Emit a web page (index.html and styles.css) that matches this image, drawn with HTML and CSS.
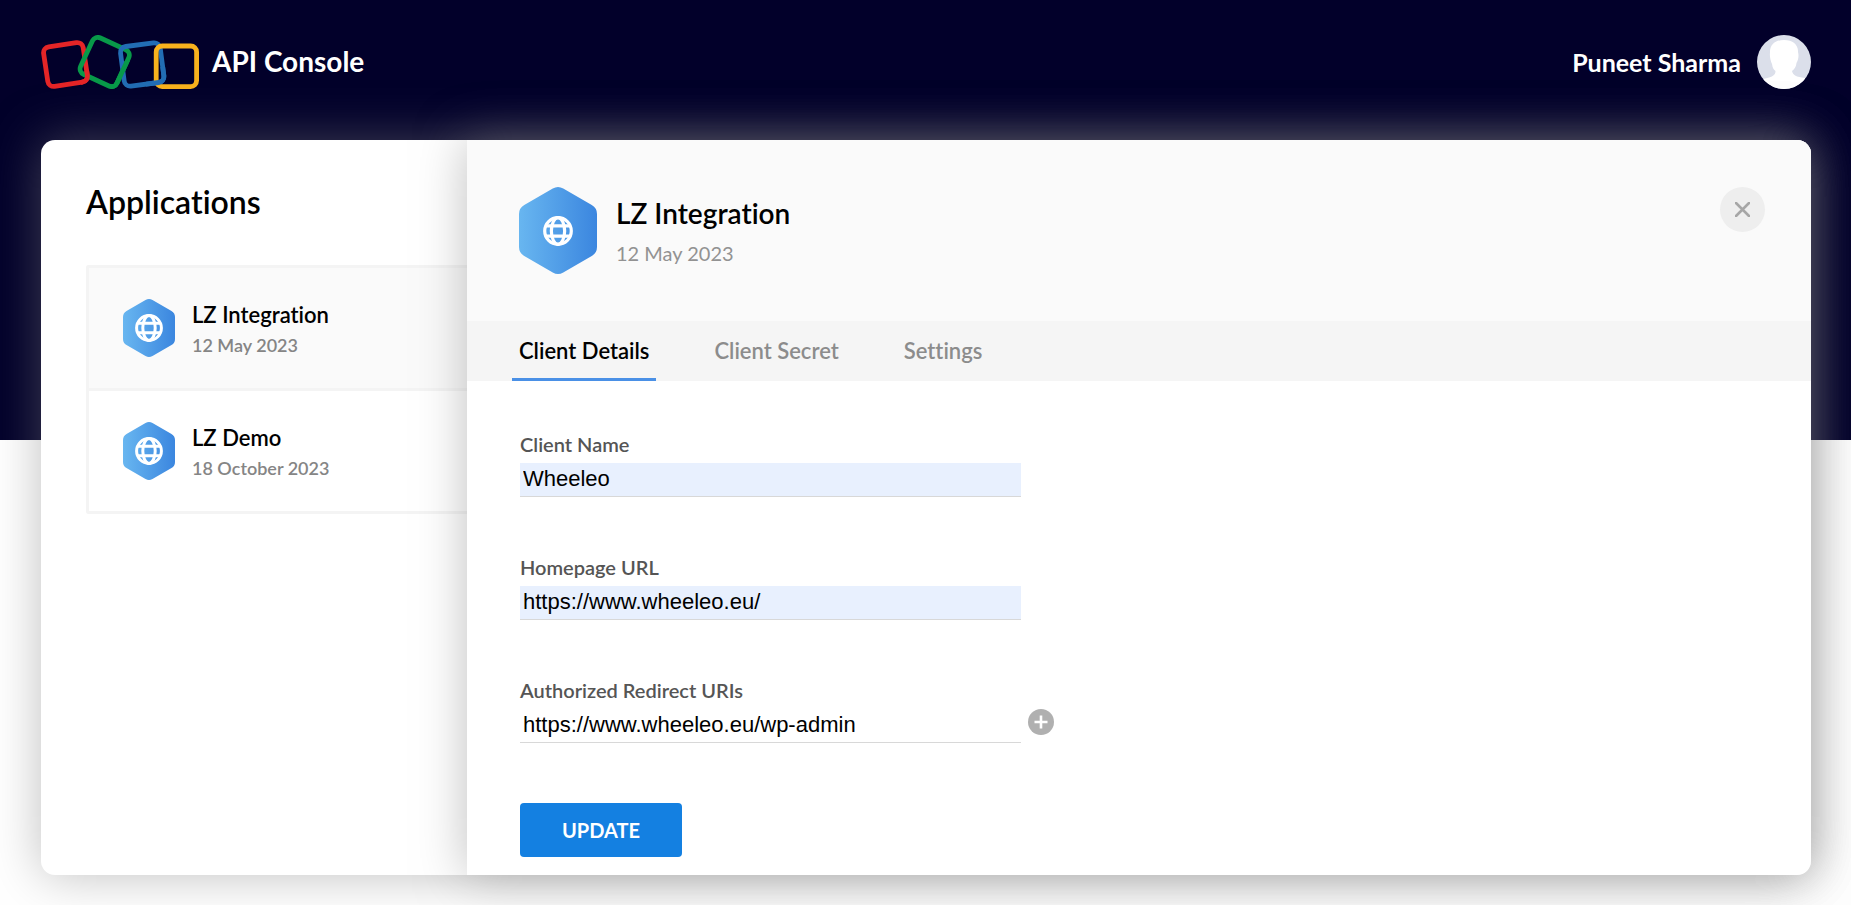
FILE: index.html
```html
<!DOCTYPE html>
<html lang="en">
<head>
<meta charset="utf-8">
<meta name="viewport" content="width=device-width, initial-scale=1">
<title>API Console</title>
<link rel="stylesheet" href="styles.css">
</head>
<body>
<svg class="defs" width="0" height="0" aria-hidden="true">
  <defs>
    <linearGradient id="hex-fill" x1="0" y1="0" x2="1" y2="0">
      <stop offset="0" stop-color="#68b6f0"/>
      <stop offset="1" stop-color="#3b86df"/>
    </linearGradient>
    <symbol id="hexagon" viewBox="0 0 52 58">
      <path fill="url(#hex-fill)" d="M22.5 1Q26-1 29.5 1L48.5 12Q52 14 52 18V40Q52 44 48.5 46L29.5 57Q26 59 22.500 57L3.500 46Q0 44 0 40V18Q0 14 3.500 12Z"/>
    </symbol>
    <symbol id="globe" viewBox="0 0 28 28">
      <g fill="none" stroke="#fff" stroke-width="3">
        <circle cx="14" cy="14" r="12.400"/>
        <ellipse cx="14" cy="14" rx="6.200" ry="12.400"/>
        <path d="M3 9.300H25M3 18.700H25"/>
      </g>
    </symbol>
  </defs>
</svg>

<header class="topbar">
  <a class="brand" href="#">
    <svg class="brand-logo" viewBox="0 0 158 54" aria-hidden="true">
      <defs>
        <rect id="ring-red" x="-20" y="-20" width="40" height="40" rx="6" stroke="#e42527" transform="translate(24.500 29.500) rotate(-8.500)"/>
        <rect id="ring-green" x="-20" y="-20" width="40" height="40" rx="6" stroke="#089949" transform="translate(63.700 27) rotate(25)"/>
        <rect id="ring-blue" x="-20" y="-20" width="40" height="40" rx="6" stroke="#226db4" transform="translate(101.200 29.500) rotate(-7.500)"/>
        <clipPath id="over-green"><rect x="40" y="36" width="20" height="18"/></clipPath>
        <clipPath id="over-blue"><rect x="70" y="26" width="25" height="28"/></clipPath>
        <clipPath id="over-yellow"><rect x="105" y="32" width="30" height="22"/></clipPath>
      </defs>
      <g fill="none" stroke-width="4.800">
        <use href="#ring-red"/>
        <use href="#ring-green"/>
        <use href="#ring-blue"/>
        <rect x="115.200" y="11" width="40.400" height="40.600" rx="6" stroke="#f9b21d"/>
        <g clip-path="url(#over-green)"><use href="#ring-red"/></g>
        <g clip-path="url(#over-blue)"><use href="#ring-green"/></g>
        <g clip-path="url(#over-yellow)"><use href="#ring-blue"/></g>
      </g>
    </svg>
    <span class="brand-name">API Console</span>
  </a>
  <div class="user">
    <span class="user-name">Puneet Sharma</span>
    <svg class="avatar" viewBox="0 0 54 54" aria-hidden="true">
      <defs><clipPath id="avatar-clip"><circle cx="27" cy="27" r="27"/></clipPath></defs>
      <g clip-path="url(#avatar-clip)">
        <rect width="54" height="54" fill="#dbdfea"/>
        <path fill="#fff" d="M27 5C18 5 12.500 10 13 18C12.500 21 13.500 26 15 29C15.500 33 17 35 18.500 36C18.500 40 16 42 6 44L4 54H50L48 43C39 42 36 40 35 36C37.500 34 39 32 39.500 28C41.500 25 42 20 41 17C41.500 10 36 5 27 5Z"/>
      </g>
    </svg>
  </div>
</header>

<main class="card">
  <section class="apps">
    <h1 class="apps-title">Applications</h1>
    <ul class="app-list">
      <li class="app app-selected">
        <span class="app-icon"><svg class="hex"><use href="#hexagon"/></svg><svg class="globe"><use href="#globe"/></svg></span>
        <div>
          <div class="app-name">LZ Integration</div>
          <div class="app-date">12 May 2023</div>
        </div>
      </li>
      <li class="app">
        <span class="app-icon"><svg class="hex"><use href="#hexagon"/></svg><svg class="globe"><use href="#globe"/></svg></span>
        <div>
          <div class="app-name">LZ Demo</div>
          <div class="app-date">18 October 2023</div>
        </div>
      </li>
    </ul>
  </section>

  <section class="panel">
    <div class="panel-head">
      <span class="app-icon app-icon-large"><svg class="hex"><use href="#hexagon"/></svg><svg class="globe"><use href="#globe"/></svg></span>
      <div class="panel-heading">
        <h2 class="panel-title">LZ Integration</h2>
        <div class="panel-date">12 May 2023</div>
      </div>
      <button class="close" type="button" aria-label="Close">
        <svg viewBox="0 0 15 15" width="15" height="15"><path d="M1 1L14 14M14 1L1 14" stroke="#a6a6a6" stroke-width="2.600" stroke-linecap="round"/></svg>
      </button>
    </div>
    <nav class="tabs">
      <a class="tab tab-active" href="#">Client Details</a>
      <a class="tab" href="#">Client Secret</a>
      <a class="tab" href="#">Settings</a>
    </nav>
    <form class="form">
      <div class="field">
        <label class="label" for="client-name">Client Name</label>
        <input class="input input-filled" id="client-name" type="text" value="Wheeleo">
      </div>
      <div class="field">
        <label class="label" for="homepage">Homepage URL</label>
        <input class="input input-filled" id="homepage" type="text" value="https://www.wheeleo.eu/">
      </div>
      <div class="field">
        <label class="label" for="redirect">Authorized Redirect URIs</label>
        <div class="input-row">
          <input class="input" id="redirect" type="text" value="https://www.wheeleo.eu/wp-admin">
          <button class="add" type="button" aria-label="Add redirect URI">
            <svg viewBox="0 0 26 26" width="26" height="26"><circle cx="13" cy="13" r="13" fill="#b0b0b0"/><path d="M13 6.500V19.500M6.500 13H19.500" stroke="#fff" stroke-width="2.600"/></svg>
          </button>
        </div>
      </div>
      <button class="update" type="button">UPDATE</button>
    </form>
  </section>
</main>
</body>
</html>
```
FILE: styles.css
```css
* {
  box-sizing: border-box;
}

body {
  margin: 0;
  min-height: 100vh;
  display: flex;
  flex-direction: column;
  background: #fff linear-gradient(#02002a, #02002a) no-repeat top / 100% 440px;
  font-family: Lato, "Open Sans", sans-serif;
  font-variant-ligatures: none;
  color: #000;
}

.defs {
  position: absolute;
}

h1,
h2,
ul {
  margin: 0;
  padding: 0;
  font-weight: 600;
}

a {
  color: inherit;
  text-decoration: none;
}

button {
  border: 0;
  padding: 0;
  background: none;
  cursor: pointer;
}

.topbar {
  display: flex;
  justify-content: space-between;
  align-items: center;
  padding: 35px 40px 51px 41px;
  color: #fff;
}

.brand,
.user {
  display: flex;
  align-items: center;
}

.brand {
  gap: 13px;
}

.brand-logo {
  width: 158px;
  height: 54px;
}

.brand-name {
  padding-bottom: 2px;
  font-size: 28px;
  font-weight: 700;
  line-height: 32px;
}

.user {
  gap: 16px;
}

.user-name {
  font-size: 25px;
  font-weight: 700;
  line-height: 32px;
}

.avatar {
  width: 54px;
  height: 54px;
}

.card {
  flex: 1;
  display: flex;
  margin: 0 40px 31px 41px;
  border-radius: 14px;
  background: #fff;
  box-shadow: 0 0 50px rgba(128, 128, 128, 0.5);
}

.apps {
  flex: 0 0 426px;
  padding: 44px 0 0 45px;
}

.apps-title {
  font-size: 32px;
  line-height: 36px;
}

.app-list {
  margin-top: 45px;
  list-style: none;
  border: 3px solid #f4f4f4;
  border-right: 0;
  border-radius: 3px 0 0 3px;
}

.app {
  display: flex;
  align-items: center;
  gap: 17px;
  height: 120px;
  padding-left: 34px;
}

.app + .app {
  border-top: 3px solid #f4f4f4;
  height: 123px;
}

.app-selected {
  background: #fafafa;
}

.app-icon {
  flex: none;
  display: grid;
  place-items: center;
  width: 52px;
  height: 58px;
}

.hex,
.globe {
  grid-area: 1 / 1;
}

.hex {
  width: 100%;
  height: 100%;
}

.globe {
  width: 28px;
  height: 28px;
}

.app-icon-large {
  width: 78px;
  height: 87px;
}

.app-icon-large .globe {
  width: 30px;
  height: 30px;
}

.app-name {
  padding-top: 4px;
  font-size: 22px;
  font-weight: 600;
  line-height: 30px;
}

.app-date {
  font-size: 18px;
  line-height: 30px;
  color: #858585;
}

.panel {
  flex: 1;
  min-width: 0;
  background: #fff;
  border-radius: 0 14px 14px 0;
  box-shadow: 0 0 50px rgba(128, 128, 128, 0.5);
}

.panel-head {
  display: flex;
  align-items: flex-start;
  padding: 47px 46px 47px 52px;
  background: #fafafa;
  border-radius: 0 14px 0 0;
}

.panel-heading {
  flex: 1;
  padding: 8px 0 0 19px;
}

.panel-title {
  font-size: 28px;
  line-height: 36px;
}

.panel-date {
  margin-top: 8px;
  font-size: 20px;
  line-height: 28px;
  color: #929292;
}

.close {
  display: grid;
  place-items: center;
  width: 45px;
  height: 45px;
  border-radius: 50%;
  background: #eee;
}

.tabs {
  display: flex;
  gap: 51px;
  padding-left: 45px;
  background: #f5f5f5;
}

.tab {
  padding: 15px 7px 12px;
  border-bottom: 3px solid transparent;
  font-size: 22px;
  font-weight: 600;
  line-height: 30px;
  color: #8c8c8c;
}

.tab-active {
  border-bottom-color: #4a90e6;
  color: #000;
}

.form {
  padding: 50px 53px 18px;
}

.field {
  margin-bottom: 57px;
}

.label {
  display: block;
  padding-bottom: 6px;
  font-size: 20px;
  font-weight: 600;
  line-height: 26px;
  color: #555;
}

.input {
  display: block;
  width: 501px;
  height: 34px;
  padding: 0 3px 2px;
  border: 0;
  border-bottom: 1px solid #d8d8d8;
  background: #fff;
  font-family: "Liberation Sans", Arial, sans-serif;
  font-size: 22px;
  color: #000;
}

.input-filled {
  background: #e8f0fe;
}

.input-row {
  display: flex;
  align-items: flex-start;
  gap: 7px;
}

.add svg {
  display: block;
}

.update {
  display: block;
  margin-top: 60px;
  padding: 12px 42px;
  border-radius: 4px;
  background: #1480e1;
  font-family: inherit;
  font-size: 20px;
  font-weight: 700;
  line-height: 30px;
  color: #fff;
}
```
